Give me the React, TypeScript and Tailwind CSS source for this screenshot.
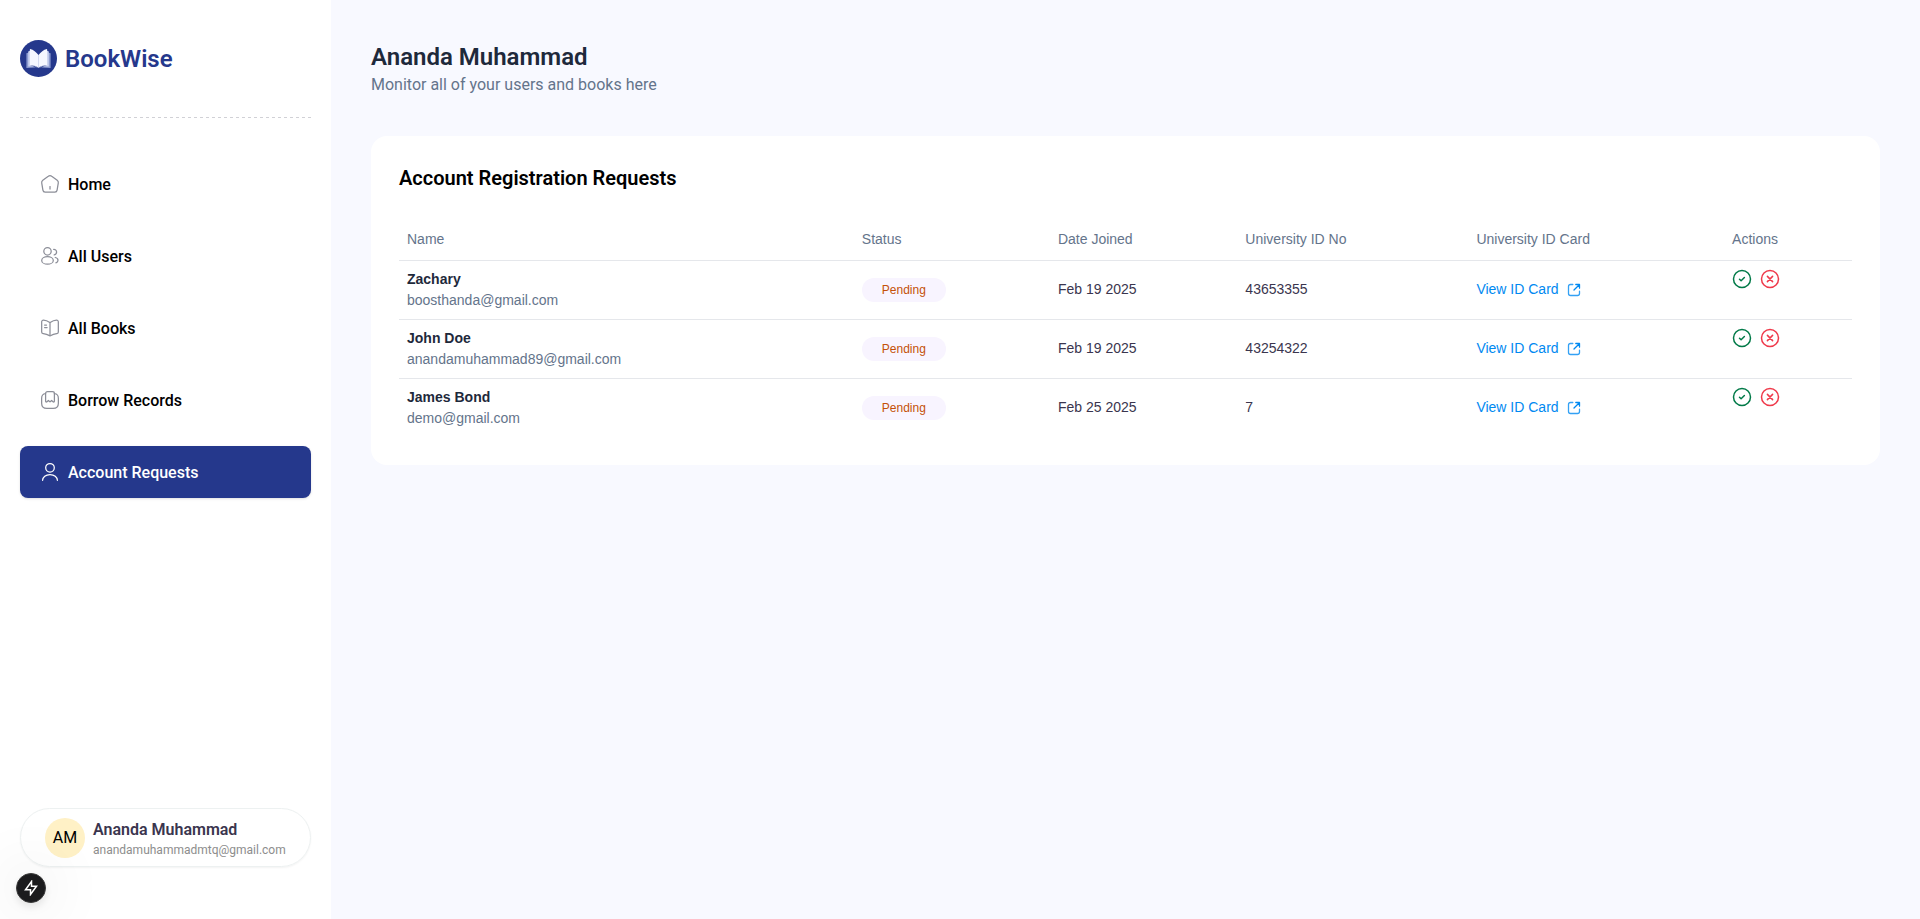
import React from "react";

type IconProps = { className?: string };

function LogoIcon() {
  return (
    <svg className="size-[37px] shrink-0" viewBox="0 0 37 37" fill="none" aria-hidden="true">
      <circle cx="18.5" cy="18.5" r="18.5" fill="#25388C" />
      <path d="M6.4 13.2 9 12.6v13.2l9.5 2.2 9.5-2.2V12.6l2.6.6V28l-9.2-.6-2.9.5-2.9-.5-9.2.6V13.2Z" fill="#8C9BD0" />
      <path d="M8.2 11.5 10.2 10.6V25.2l8.3 2.5 8.3-2.5V10.6l2 .9v15l-7.6-.2-2.7 1.5-2.7-1.5-7.6.2v-15Z" fill="#C9D1EF" />
      <path d="M10.2 8.9c3.2.9 6 2.8 8.3 6.1v12.7c-2.3-1.8-5-2.5-8.6-2.1V9.4c0-.4.1-.5.3-.5Z" fill="#F5F7FF" />
      <path d="M26.8 8.9c-3.2.9-6 2.8-8.3 6.1v12.7c2.3-1.8 5-2.5 8.6-2.1V9.4c0-.4-.1-.5-.3-.5Z" fill="#F5F7FF" />
      <path d="M18.5 15v12.5" stroke="#D9DFF5" strokeWidth=".8" />
    </svg>
  );
}

function HomeIcon({ className }: IconProps) {
  return (
    <svg className={className} viewBox="0 0 20 20" fill="none" stroke="currentColor" strokeWidth="1.25" strokeLinecap="round" strokeLinejoin="round" aria-hidden="true">
      <path d="M8.3 2.3 2.8 6.3c-.9.7-1.3 1.4-1.1 2.5l1.2 7.3c.2 1.3 1 2 2.2 2h9.8c1.200 0 2-.7 2.200-2l1.200-7.300c.2-1.100-.2-1.800-1.100-2.500l-5.500-4c-1.100-.9-2.300-.9-3.400 0Z" />
      <path d="M10 12.500v2.500" />
    </svg>
  );
}

function UsersIcon({ className }: IconProps) {
  return (
    <svg className={className} viewBox="0 0 20 20" fill="none" stroke="currentColor" strokeWidth="1.25" strokeLinecap="round" strokeLinejoin="round" aria-hidden="true">
      <circle cx="7.5" cy="5.3" r="3.7" />
      <ellipse cx="7.5" cy="14.4" rx="5.8" ry="3.8" />
      <path d="M13.7 3.4c1.700-.1 2.900 1.100 2.900 2.700 0 1.400-1 2.500-2.400 2.700" />
      <path d="M15.300 11.500c1.600.3 2.700 1.300 2.700 2.700 0 1.300-.8 2.200-2.100 2.700" />
    </svg>
  );
}

function BookIcon({ className }: IconProps) {
  return (
    <svg className={className} viewBox="0 0 20 20" fill="none" stroke="currentColor" strokeWidth="1.25" strokeLinecap="round" strokeLinejoin="round" aria-hidden="true">
      <path d="M18.33 13.95V3.9c0-1-.8-1.74-1.8-1.66h-.05c-1.75.15-4.4 1.04-5.88 1.97l-.14.09c-.24.15-.64.15-.88 0l-.21-.12C7.89 3.25 5.24 2.37 3.490 2.230 2.490 2.150 1.670 2.900 1.670 3.890v10.060c0 .8.65 1.550 1.450 1.650l.24.030c1.810.24 4.600 1.160 6.200 2.030l.03.020c.23.120.59.120.8 0 1.600-.88 4.400-1.800 6.220-2.050l.27-.030c.8-.1 1.450-.85 1.450-1.650Z" />
      <path d="M10 4.600v12.500M6.460 7.100H4.600M7.080 9.600H4.600" />
    </svg>
  );
}

function BookmarkIcon({ className }: IconProps) {
  return (
    <svg className={className} viewBox="0 0 20 20" fill="none" stroke="currentColor" strokeWidth="1.25" strokeLinecap="round" strokeLinejoin="round" aria-hidden="true">
      <path d="M5.600 3.500c-2.700.4-3.970 2-3.970 4.900v4.800c0 3.600 1.500 5.170 5.200 5.170h6.340c3.700 0 5.200-1.570 5.200-5.170V8.400c0-2.900-1.270-4.500-3.970-4.900" />
      <path d="M5.600 3.500c0-1.100.8-1.870 1.900-1.870h5c1.100 0 1.900.77 1.900 1.870v7.500c0 .9-.7 1.300-1.400.7l-1.400-1.200-1.100 1c-.3.300-.7.300-1 0l-1.100-1L7 11.700c-.7.600-1.400.2-1.400-.7V3.500Z" />
    </svg>
  );
}

function UserIcon({ className }: IconProps) {
  return (
    <svg className={className} viewBox="0 0 20 20" fill="none" stroke="currentColor" strokeWidth="1.25" strokeLinecap="round" strokeLinejoin="round" aria-hidden="true">
      <circle cx="10" cy="5.8" r="4.3" />
      <path d="M17.400 18.300c0-3.200-3.200-5.800-7.400-5.800s-7.400 2.600-7.400 5.800" />
    </svg>
  );
}

function ExternalIcon() {
  return (
    <svg className="size-3.5" viewBox="0 0 14 14" fill="none" stroke="currentColor" strokeWidth="1.3" strokeLinecap="round" strokeLinejoin="round" aria-hidden="true">
      <path d="M5.800 1.500H3.500c-1.300 0-2 .7-2 2v7c0 1.300.7 2 2 2h7c1.300 0 2-.7 2-2V8.200" strokeOpacity=".8" />
      <path d="M7 7l5.300-5.300M8.800 1.500h3.700v3.700" />
    </svg>
  );
}

function ApproveIcon() {
  return (
    <svg className="size-5" viewBox="0 0 20 20" fill="none" stroke="#027A48" strokeWidth="1.5" strokeLinecap="round" strokeLinejoin="round" aria-hidden="true">
      <circle cx="10" cy="10" r="8.5" />
      <path d="m7.500 10.200 1.600 1.600 3.300-3.300" />
    </svg>
  );
}

function RejectIcon() {
  return (
    <svg className="size-5" viewBox="0 0 20 20" fill="none" stroke="#EF3A4B" strokeWidth="1.5" strokeLinecap="round" strokeLinejoin="round" aria-hidden="true">
      <circle cx="10" cy="10" r="8.5" />
      <path d="m7.400 7.400 5.200 5.200M12.600 7.400l-5.200 5.200" />
    </svg>
  );
}

const navItems = [
  { label: "Home", Icon: HomeIcon },
  { label: "All Users", Icon: UsersIcon },
  { label: "All Books", Icon: BookIcon },
  { label: "Borrow Records", Icon: BookmarkIcon },
  { label: "Account Requests", Icon: UserIcon, active: true },
];

const requests = [
  { name: "Zachary", email: "boosthanda@gmail.com", joined: "Feb 19 2025", id: "43653355" },
  { name: "John Doe", email: "anandamuhammad89@gmail.com", joined: "Feb 19 2025", id: "43254322" },
  { name: "James Bond", email: "demo@gmail.com", joined: "Feb 25 2025", id: "7" },
];

const columns = [
  { label: "Name", width: "w-[31.3%]" },
  { label: "Status", width: "w-[13.5%]" },
  { label: "Date Joined", width: "w-[12.9%]" },
  { label: "University ID No", width: "w-[15.9%]" },
  { label: "University ID Card", width: "w-[17.6%]" },
  { label: "Actions", width: "w-[8.8%]" },
];

function Sidebar() {
  return (
    <aside className="sticky top-0 flex h-screen w-[331px] shrink-0 flex-col justify-between bg-white px-5 pt-10 pb-[52px]">
      <div>
        <a href="#" className="flex items-center gap-2">
          <LogoIcon />
          <span className="pt-px text-2xl font-semibold text-[#25388C]">BookWise</span>
        </a>
        <div className="mt-10 h-px bg-[repeating-linear-gradient(to_right,#D1D1D6_0px,#D1D1D6_3px,transparent_3px,transparent_6px)]" />
        <nav className="mt-10 flex flex-col gap-5">
          {navItems.map(({ label, Icon, active }) => (
            <a
              key={label}
              href="#"
              aria-current={active ? "page" : undefined}
              className={
                active
                  ? "flex h-13 items-center gap-2 rounded-lg bg-[#25388C] px-5 font-medium text-white shadow-sm"
                  : "flex h-13 items-center gap-2 rounded-lg px-5 font-medium text-black"
              }
            >
              <Icon className={active ? "size-5 text-white" : "size-5 text-[#8C8E98]"} />
              <span className="pt-px">{label}</span>
            </a>
          ))}
        </nav>
      </div>
      <div className="flex items-center gap-2 rounded-full border border-[#EDF1F1] px-6 py-2 shadow-xs">
        <div className="flex size-10 shrink-0 items-center justify-center rounded-full bg-[#FFF1C6] pt-px text-black">AM</div>
        <div className="flex flex-col pt-px">
          <p className="text-base leading-6 font-semibold text-[#3A354E]">Ananda Muhammad</p>
          <p className="text-xs leading-4 text-[#8D8D8D]">anandamuhammadmtq@gmail.com</p>
        </div>
      </div>
    </aside>
  );
}

function RequestsTable() {
  return (
    <table className="mt-7 w-full table-fixed text-left font-['Liberation_Sans',Arial,sans-serif] text-sm leading-[21px]">
      <thead>
        <tr className="h-10 border-b border-[#E5E7EB]">
          {columns.map(({ label, width }) => (
            <th key={label} scope="col" className={`${width} px-2 font-normal text-[#64748B]`}>
              {label}
            </th>
          ))}
        </tr>
      </thead>
      <tbody>
        {requests.map(({ name, email, joined, id }) => (
          <tr key={name} className="h-[59px] border-b border-[#E5E7EB] last:border-b-0">
            <td className="p-2">
              <p className="font-semibold text-[#1E293B]">{name}</p>
              <p className="text-[#64748B]">{email}</p>
            </td>
            <td className="p-2">
              <span className="flex h-6 w-fit items-center rounded-full bg-[#F8F4FF] px-5 text-xs font-medium text-[#C4510A]">
                Pending
              </span>
            </td>
            <td className="p-2 text-[#3A354E]">{joined}</td>
            <td className="p-2 text-[#3A354E]">{id}</td>
            <td className="p-2">
              <a href="#" className="flex w-fit items-center gap-2 text-[#0089F1]">
                View ID Card
                <ExternalIcon />
              </a>
            </td>
            <td className="p-2 align-top">
              <div className="flex gap-2">
                <button type="button" aria-label="Approve">
                  <ApproveIcon />
                </button>
                <button type="button" aria-label="Reject">
                  <RejectIcon />
                </button>
              </div>
            </td>
          </tr>
        ))}
      </tbody>
    </table>
  );
}

export default function App() {
  return (
    <div className="flex min-h-screen bg-[#F8F9FF] font-[Roboto,sans-serif] text-base text-black">
      <Sidebar />
      <main className="min-w-0 flex-1 px-10 pt-[41px] pb-10">
        <header>
          <h2 className="text-2xl font-semibold text-[#1E293B]">Ananda Muhammad</h2>
          <p className="text-[#64748B]">Monitor all of your users and books here</p>
        </header>
        <section className="mt-[39px] rounded-2xl bg-white p-7">
          <h2 className="text-xl font-semibold">Account Registration Requests</h2>
          <RequestsTable />
        </section>
      </main>
      <button
        type="button"
        aria-label="Developer tools"
        className="fixed bottom-4 left-4 flex size-[30px] items-center justify-center rounded-full border border-[#3A3A3A] bg-[#1B1B1D] shadow-[0_4px_8px_rgba(0,0,0,0.1),0_0_64px_rgba(0,0,0,0.2)]"
      >
        <svg className="size-4" viewBox="0 0 16 16" fill="none" stroke="#FFFFFF" strokeWidth="1.5" aria-hidden="true">
          <path d="M8.500 1.500v4.700h5L7.500 14.500V9.800h-5L8.500 1.500Z" />
        </svg>
      </button>
    </div>
  );
}
